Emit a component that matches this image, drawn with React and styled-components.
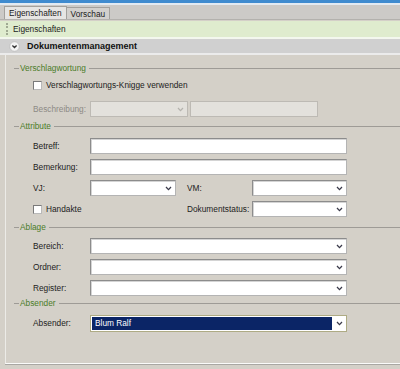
import React from 'react';
import styled, { createGlobalStyle } from 'styled-components';

const GlobalStyle = createGlobalStyle`
  html, body { margin: 0; padding: 0; }
  body {
    width: 400px; height: 369px; overflow: hidden;
    background: #d4d0c8;
    font-family: "Liberation Sans", Arial, sans-serif;
    font-size: 8.3px;
    color: #1c1c1c;
  }
`;

const Window = styled.div`
  width: 400px; height: 369px;
  display: flex; flex-direction: column;
  background: #d4d0c8;
  overflow: hidden;
`;

const TitleBar = styled.div`
  height: 3px; flex: none;
  background: #3f8bcf;
  border-bottom: 2px solid #e2eaf2;
`;

const TabStrip = styled.div`
  height: 14px; flex: none;
  background: #cccac7;
  border-bottom: 1px solid #b3b1ad;
  display: flex; align-items: flex-end;
  padding-left: 4px;
`;

const Tab = styled.div`
  height: ${p => (p.$active ? 13 : 12)}px;
  box-sizing: border-box;
  padding: 0 4px 0 4px;
  display: flex; align-items: center;
  background: ${p => (p.$active ? '#e6e5e3' : '#d2d0cd')};
  border: 1px solid #a3a19d;
  border-bottom: none;
  margin-right: -1px;
  color: #1a1a1a;
`;

const Toolbar = styled.div`
  height: 16px; flex: none;
  margin-top: 1px;
  background: #dfecce;
  border-bottom: 2px solid #f3f7ee;
  display: flex; align-items: center;
  padding-left: 6px; gap: 5px;
`;

const Grip = styled.div`
  width: 0; height: 12px;
  border-left: 2px dotted #a0aa92;
`;

const SectionHeader = styled.div`
  height: 14px; flex: none;
  background: #d0d0d0;
  border-bottom: 2px solid #ebebeb;
  display: flex; align-items: center;
  padding-left: 9px; gap: 7px;
  font-weight: bold; font-size: 9px; color: #111;
`;

const Content = styled.div`
  flex: none;
  height: 309px; box-sizing: border-box;
  margin-left: 5px;
  border-left: 1px solid #ecebe7;
  border-bottom: 1px solid #fbfbfa;
  box-shadow: 0 1px 0 #a9a7a3;
  padding-top: 7px;
  display: flex; flex-direction: column;
`;

const GroupHeader = styled.div`
  height: 12px; flex: none;
  margin-top: ${p => p.$top || 0}px;
  display: flex; align-items: center;
  padding-left: 8px;
  color: #4a7c28;
  &::before {
    content: ''; width: 5px; height: 0;
    border-top: 1px solid #9e9b96;
    margin-right: 1px;
  }
  &::after {
    content: ''; flex: 1; height: 0;
    border-top: 1px solid #9e9b96;
    margin-left: 3px;
  }
`;

const Fields = styled.div`
  display: flex; flex-direction: column;
  gap: ${p => p.$gap || 5}px;
  margin-top: ${p => p.$top || 0}px;
`;

const Row = styled.div`
  display: flex; align-items: center;
  height: 16px;
  padding-left: 27px;
`;

const Label = styled.span`
  width: ${p => p.$w || 57}px; flex: none;
  margin-left: ${p => p.$ml || 0}px;
  white-space: nowrap;
  color: ${p => (p.$disabled ? '#8d8a85' : '#1c1c1c')};
`;

const CheckWrap = styled.label`
  width: ${p => p.$w || 'auto'}; flex: none;
  display: flex; align-items: center; gap: 4px;
  white-space: nowrap;
`;

const Box = styled.span`
  width: 9px; height: 9px; box-sizing: border-box;
  background: #fff;
  border: 1px solid;
  border-color: #7a7a7a #b9b9b9 #b9b9b9 #7a7a7a;
`;

const Field = styled.div`
  width: ${p => p.$w}px; height: 16px; box-sizing: border-box; flex: none;
  margin-left: ${p => p.$ml || 0}px;
  background: ${p => (p.$disabled ? '#e3e1dc' : '#fff')};
  border: 1px solid;
  border-color: ${p => (p.$disabled ? '#bdbab4' : '#8c8c8c #b4b4b4 #b4b4b4 #8c8c8c')};
  box-shadow: ${p => (p.$disabled ? 'none' : 'inset 1px 1px 0 #d4d4d4')};
  display: flex; align-items: center; justify-content: flex-end;
  padding-right: 3px;
`;

const SelectedCombo = styled.div`
  width: ${p => p.$w}px; height: 17px; box-sizing: border-box; flex: none;
  background: #fff;
  border: 1px solid #aeab84;
  padding: 1px 0 1px 1px;
  display: flex; align-items: stretch;
`;

const Selection = styled.div`
  flex: 1;
  background: #0b2566;
  color: #fff;
  display: flex; align-items: center;
  padding-left: 3px;
`;

const ArrowCell = styled.div`
  width: 14px; flex: none;
  display: flex; align-items: center; justify-content: center;
`;

const Arrow = ({ color = '#3a3a4a' }) => (
  <svg width="7" height="5" viewBox="0 0 7 5">
    <path d="M1 1 L3.5 3.6 L6 1" fill="none" stroke={color} strokeWidth="1.3" />
  </svg>
);

const Chevron = () => (
  <svg width="11" height="11" viewBox="0 0 11 11">
    <circle cx="5.5" cy="5.5" r="4.8" fill="#f4f4f4" stroke="#bcbcbc" strokeWidth="0.8" />
    <path d="M3.4 4.5 L5.5 6.5 L7.6 4.5" fill="none" stroke="#333" strokeWidth="1.3" />
  </svg>
);

export default function App() {
  return (
    <Window>
      <GlobalStyle />
      <TitleBar />
      <TabStrip>
        <Tab $active>Eigenschaften</Tab>
        <Tab>Vorschau</Tab>
      </TabStrip>
      <Toolbar>
        <Grip />
        <span>Eigenschaften</span>
      </Toolbar>
      <SectionHeader>
        <Chevron />
        <span>Dokumentenmanagement</span>
      </SectionHeader>
      <Content>
        <GroupHeader>Verschlagwortung</GroupHeader>
        <Fields $top={3} $gap={8}>
          <Row>
            <CheckWrap><Box />Verschlagwortungs-Knigge verwenden</CheckWrap>
          </Row>
          <Row>
            <Label $disabled>Beschreibung:</Label>
            <Field $w={98} $disabled><Arrow color="#b5b3ae" /></Field>
            <Field $w={128} $ml={2} $disabled />
          </Row>
        </Fields>

        <GroupHeader $top={3}>Attribute</GroupHeader>
        <Fields $top={6}>
          <Row>
            <Label>Betreff:</Label>
            <Field $w={257} />
          </Row>
          <Row>
            <Label>Bemerkung:</Label>
            <Field $w={257} />
          </Row>
          <Row>
            <Label>VJ:</Label>
            <Field $w={86}><Arrow /></Field>
            <Label $w={65} $ml={11}>VM:</Label>
            <Field $w={95}><Arrow /></Field>
          </Row>
          <Row>
            <CheckWrap $w="154px"><Box />Handakte</CheckWrap>
            <Label $w={65}>Dokumentstatus:</Label>
            <Field $w={95}><Arrow /></Field>
          </Row>
        </Fields>

        <GroupHeader $top={4}>Ablage</GroupHeader>
        <Fields $top={5}>
          <Row>
            <Label>Bereich:</Label>
            <Field $w={257}><Arrow /></Field>
          </Row>
          <Row>
            <Label>Ordner:</Label>
            <Field $w={257}><Arrow /></Field>
          </Row>
          <Row>
            <Label>Register:</Label>
            <Field $w={257}><Arrow /></Field>
          </Row>
        </Fields>

        <GroupHeader $top={1}>Absender</GroupHeader>
        <Fields $top={6}>
          <Row>
            <Label>Absender:</Label>
            <SelectedCombo $w={257}>
              <Selection>Blum Ralf</Selection>
              <ArrowCell><Arrow /></ArrowCell>
            </SelectedCombo>
          </Row>
        </Fields>
      </Content>
    </Window>
  );
}
